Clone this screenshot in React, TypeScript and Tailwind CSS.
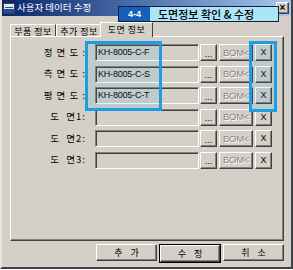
import type { ReactNode } from 'react';

const raised =
  'border-t border-l border-t-white border-l-white border-r border-b border-r-[#404040] border-b-[#404040] shadow-[inset_-1px_-1px_0_#808080]';
const sunken =
  'border-t border-l border-t-[#808080] border-l-[#808080] border-r border-b border-r-white border-b-white shadow-[inset_1px_1px_0_#404040]';

function Btn({ children, className = '' }: { children: ReactNode; className?: string }) {
  return (
    <div className={`h-[17px] flex items-center justify-center bg-[#d4d0c8] ${raised} ${className}`}>
      {children}
    </div>
  );
}

const rows = [
  { label: '정 면 도 :', value: 'KH-8005-C-F' },
  { label: '측 면 도 :', value: 'KH-8005-C-S' },
  { label: '평 면 도 :', value: 'KH-8005-C-T' },
  { label: '도  면1:', value: '' },
  { label: '도  면2:', value: '' },
  { label: '도  면3:', value: '' },
];

function Row({ label, value }: { label: string; value: string }) {
  return (
    <div className="flex items-center h-[17px]">
      <div className="w-[75px] text-right whitespace-pre text-[9.5px] leading-none tracking-[1px] text-black font-['Noto_Sans_CJK_KR',sans-serif]">
        {label}
      </div>
      <div className={`ml-[9px] w-[104px] h-[17px] flex items-center pl-[2px] bg-[#d4d0c8] ${sunken}`}>
        <span className="text-[9px] leading-none text-black font-['Liberation_Sans',sans-serif] tracking-[-0.2px]">
          {value}
        </span>
      </div>
      <Btn className="ml-[1px] w-[17px]">
        <span className="text-[9px] leading-none font-['Liberation_Sans',sans-serif] -mb-[3px]">...</span>
      </Btn>
      <Btn className="ml-[2px] w-[34px]">
        <span className="text-[9.5px] leading-none tracking-[-0.3px] text-[#8a8780] font-['Liberation_Sans',sans-serif] [text-shadow:1px_1px_0_#fff]">
          BOM&lt;
        </span>
      </Btn>
      <Btn className="ml-[2px] w-[17px]">
        <span className="text-[9px] leading-none font-['Liberation_Sans',sans-serif]">X</span>
      </Btn>
    </div>
  );
}

function Tab({ label, active = false }: { label: string; active?: boolean }) {
  return (
    <div
      className={`flex items-center justify-center bg-[#d4d0c8] border-t border-l border-t-white border-l-white border-r border-r-[#404040] text-[9px] leading-none tracking-[0.5px] font-['Noto_Sans_CJK_KR',sans-serif] text-black ${
        active ? 'h-[15px] w-[53px] -ml-[2px] -mb-[1px] z-10 pb-[1px]' : 'h-[12px] w-[46px] pt-[1px]'
      }`}
    >
      {label}
    </div>
  );
}

export default function App() {
  return (
    <div className="relative w-[293px] h-[270px] bg-white overflow-hidden">
      <div className="w-[293px] h-[269px] bg-[#d4d0c8] border-l-2 border-l-[#e8e6e0] border-r-2 border-r-[#404040] border-b-2 border-b-[#404040] flex flex-col">
        {/* Title bar */}
        <div className="h-[16px] flex items-center bg-gradient-to-r from-[#0a246a] to-[#a6caf0]">
          <div className="ml-[1px] w-[12px] h-[11px] bg-[#e6e6e6] border border-[#404040] relative overflow-hidden">
            <div className="absolute left-0 right-0 bottom-0 h-[4px] bg-[#1f4fa0]" />
            <div className="absolute left-[1px] top-[1px] w-[8px] h-[3px] border-b border-[#1f4fa0]" />
          </div>
          <span className="ml-[2px] text-[9.5px] leading-none text-white font-['Noto_Sans_CJK_KR',sans-serif]">
            사용자 데이터 수정
          </span>
          <div className={`ml-auto mr-[2px] w-[13px] h-[12px] flex items-center justify-center bg-[#d4d0c8] ${raised}`}>
            <span className="text-[10px] leading-none font-bold font-['Liberation_Sans',sans-serif]">×</span>
          </div>
        </div>

        <div className="flex-1 flex flex-col pl-[8px] pr-[7px] pt-[6px]">
          {/* Tabs */}
          <div className="flex items-end h-[14px]">
            <Tab label="부품 정보" />
            <Tab label="추가 정보" />
            <Tab label="도면 정보" active />
          </div>

          {/* Panel */}
          <div className="h-[205px] border-t border-l border-t-white border-l-white border-r border-b border-r-[#404040] border-b-[#404040] shadow-[inset_-1px_-1px_0_#808080] pt-[7px] flex flex-col gap-[4.5px]">
            {rows.map((r) => (
              <Row key={r.label} label={r.label} value={r.value} />
            ))}
          </div>

          {/* Bottom buttons */}
          <div className="mt-[3px] flex justify-end gap-[2px]">
            <Btn className="w-[61px]">
              <span className="text-[9px] leading-none whitespace-pre font-['Noto_Sans_CJK_KR',sans-serif]">추    가</span>
            </Btn>
            <div className="border border-black">
              <Btn className="w-[60px] h-[15px]">
                <span className="text-[9px] leading-none whitespace-pre font-['Noto_Sans_CJK_KR',sans-serif]">수    정</span>
              </Btn>
            </div>
            <Btn className="w-[61px]">
              <span className="text-[9px] leading-none whitespace-pre font-['Noto_Sans_CJK_KR',sans-serif]">취    소</span>
            </Btn>
          </div>
        </div>
      </div>

      {/* Annotation overlays */}
      <div className="absolute left-[118px] top-[6px] h-[16px] flex border border-[#1a1a40]">
        <div className="w-[31px] bg-[#1560b8] flex items-center justify-center">
          <span className="text-[9px] leading-none font-bold text-white font-['Liberation_Sans',sans-serif]">4-4</span>
        </div>
        <div className="w-[128px] bg-[#abe6f6] flex items-center pl-[8px]">
          <span className="text-[11px] leading-none font-medium text-black font-['Noto_Sans_CJK_KR',sans-serif]">
            도면정보 확인 &amp; 수정
          </span>
        </div>
      </div>
      <div className="absolute left-[85px] top-[41px] w-[77px] h-[70px] border-[3px] border-[#1c9ee2] bg-[#1c9ee2]/10" />
      <div className="absolute left-[249px] top-[41px] w-[28px] h-[71px] border-[3px] border-[#1c9ee2] bg-[#1c9ee2]/10" />
    </div>
  );
}
